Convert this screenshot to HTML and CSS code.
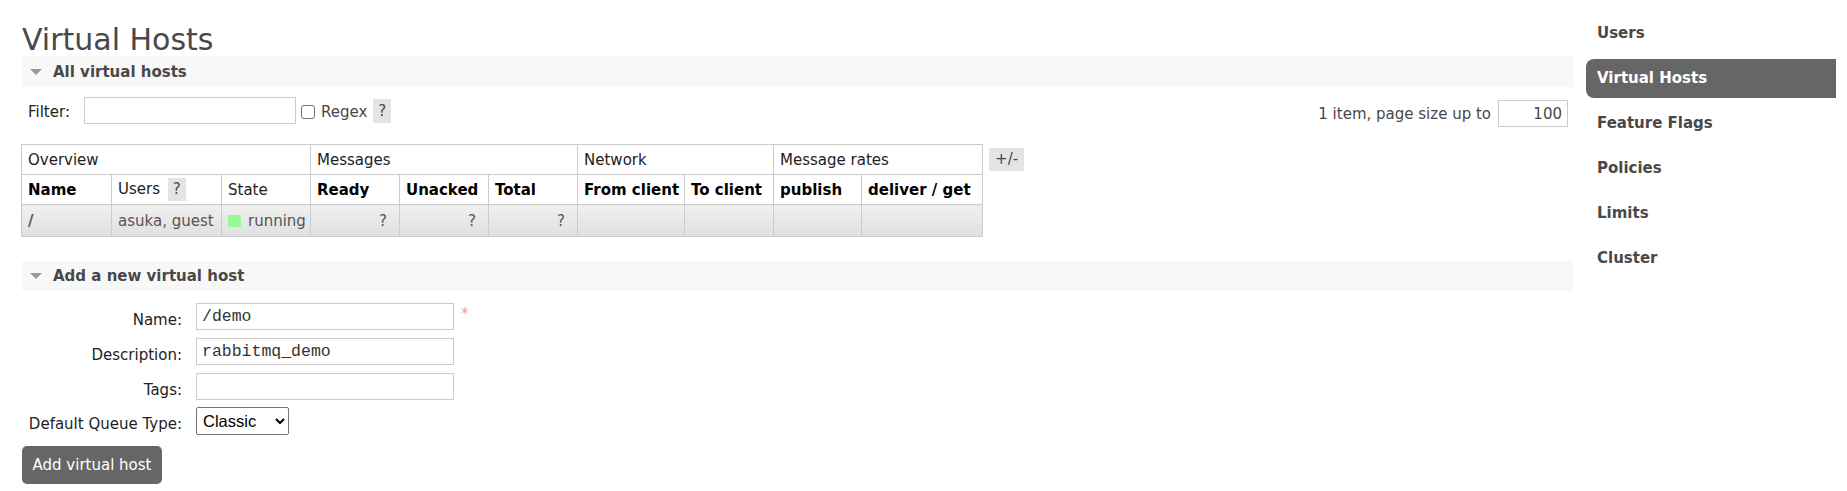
FILE: index.html
```html
<!DOCTYPE html>
<html>
<head>
<meta charset="utf-8">
<link rel="stylesheet" href="styles.css">
</head>
<body>
<div class="layout">
  <div class="main">
    <h1 class="title">Virtual Hosts</h1>
    <div class="section-head"><span class="tri"></span>All virtual hosts</div>
    <div class="filter-row">
      <div class="filter-left">
        <label class="lbl">Filter:</label>
        <input class="text-in filter-in" type="text">
        <input class="chk" type="checkbox">
        <span class="regex">Regex</span>
        <span class="help">?</span>
      </div>
      <div class="filter-right">
        <span>1 item, page size up to</span>
        <input class="text-in page-in" type="text" value="100">
      </div>
    </div>
    <div class="table-wrap">
      <table class="list">
        <colgroup>
          <col class="w90"><col class="w110"><col class="w89">
          <col class="w89"><col class="w89"><col class="w89">
          <col class="w107"><col class="w89">
          <col class="w88"><col class="w121">
        </colgroup>
        <thead>
          <tr class="grp">
            <th colspan="3">Overview</th>
            <th colspan="3">Messages</th>
            <th colspan="2">Network</th>
            <th colspan="2">Message rates</th>
          </tr>
          <tr class="cols">
            <th class="b">Name</th>
            <th>Users <span class="help sm">?</span></th>
            <th>State</th>
            <th class="b">Ready</th>
            <th class="b">Unacked</th>
            <th class="b">Total</th>
            <th class="b">From client</th>
            <th class="b">To client</th>
            <th class="b">publish</th>
            <th class="b">deliver / get</th>
          </tr>
        </thead>
        <tbody>
          <tr class="data">
            <td class="b dark">/</td>
            <td>asuka, guest</td>
            <td><span class="dot"></span>running</td>
            <td class="q">?</td>
            <td class="q">?</td>
            <td class="q">?</td>
            <td></td>
            <td></td>
            <td></td>
            <td></td>
          </tr>
        </tbody>
      </table>
      <span class="plusminus">+/-</span>
    </div>
    <div class="section-head second"><span class="tri"></span>Add a new virtual host</div>
    <div class="form">
      <div class="frow">
        <label class="flbl">Name:</label>
        <input class="text-in mono" type="text" value="/demo">
        <span class="req">*</span>
      </div>
      <div class="frow">
        <label class="flbl">Description:</label>
        <input class="text-in mono" type="text" value="rabbitmq_demo">
      </div>
      <div class="frow">
        <label class="flbl">Tags:</label>
        <input class="text-in mono" type="text">
      </div>
      <div class="frow sel-row">
        <label class="flbl">Default Queue Type:</label>
        <select class="sel"><option>Classic</option></select>
      </div>
    </div>
    <button class="btn">Add virtual host</button>
  </div>
  <nav class="side">
    <a class="nav">Users</a>
    <a class="nav active">Virtual Hosts</a>
    <a class="nav">Feature Flags</a>
    <a class="nav">Policies</a>
    <a class="nav">Limits</a>
    <a class="nav">Cluster</a>
  </nav>
</div>
</body>
</html>
```

FILE: styles.css
```css
* { box-sizing: border-box; }
html, body { margin: 0; padding: 0; background: #fff; }
body {
  font-family: "DejaVu Sans", Verdana, sans-serif;
  font-size: 15px;
  color: #484848;
  width: 1847px;
  height: 491px;
  overflow: hidden;
}
.layout { display: flex; }
.main { width: 1573px; padding-left: 22px; }
.title {
  margin: 0;
  padding-top: 24px;
  height: 56px;
  font-size: 30px;
  font-weight: normal;
  line-height: 32px;
  color: #484848;
}
.section-head {
  height: 31px;
  background: #f8f8f8;
  font-weight: bold;
  font-size: 15px;
  color: #484848;
  display: flex;
  align-items: center;
}
.section-head.second { margin-top: 24px; height: 30px; }
.tri {
  width: 0; height: 0;
  border-left: 6px solid transparent;
  border-right: 6px solid transparent;
  border-top: 6px solid #999;
  margin-left: 8px;
  margin-right: 11px;
}
.filter-row {
  display: flex;
  justify-content: space-between;
  align-items: flex-start;
  margin-top: 10px;
  height: 28px;
}
.filter-left { display: flex; align-items: center; height: 27px; }
.lbl { margin-left: 6px; margin-right: 14px; color: #222; padding-top: 2px; }
.text-in {
  border: 1px solid #ccc;
  height: 27px;
  padding: 0 5px;
  font-size: 15px;
  font-family: "DejaVu Sans", sans-serif;
  color: #484848;
  outline: none;
  background: #fff;
}
.filter-in { width: 212px; height: 27px; }
.chk {
  appearance: none;
  width: 14px; height: 14px;
  margin: 2px 6px 0 5px;
  border: 1px solid #767676;
  border-radius: 3px;
  background: #fff;
}
.regex { color: #484848; padding-top: 2px; }
.help {
  display: inline-block;
  background: #e4e4e4;
  padding: 0 5px;
  margin-left: 6px;
  line-height: 24px;
  color: #484848;
}
.help.sm { line-height: 23px; padding: 0 5px; margin-left: 3px; }
.filter-right { display: flex; align-items: center; color: #484848; padding-top: 3px; }
.page-in { width: 70px; height: 27px; margin-left: 7px; text-align: right; margin-right: 5px; }
.table-wrap { display: flex; align-items: flex-start; margin-top: 19px; margin-left: -1px; }
.list {
  border-collapse: collapse;
  table-layout: fixed;
  width: 962px;
  font-size: 15px;
}
.w88 { width: 88px; }
.w89 { width: 89px; }
.w90 { width: 90px; }
.w107 { width: 107px; }
.w110 { width: 110px; }
.w121 { width: 121px; }
.list th, .list td {
  border: 1px solid #ccc;
  text-align: left;
  padding: 0 6px;
  white-space: nowrap;
  overflow: hidden;
}
.list th { font-weight: normal; color: #222; height: 30px; }
.list .b { font-weight: bold; color: #000; }
.list tr.data td {
  height: 32px;
  background: linear-gradient(#f0f0f0, #e0e0e0);
  color: #555;
}
.list td.dark { color: #000; }
.list td.q { text-align: right; color: #999; padding-right: 12px; }
.dot {
  display: inline-block;
  width: 13px; height: 12px;
  background: #98f898;
  margin-right: 7px;
  vertical-align: -1px;
}
.plusminus {
  margin-left: 6px;
  margin-top: 4px;
  background: #e4e4e4;
  padding: 0 6px;
  line-height: 23px;
  color: #484848;
  font-size: 15px;
}
.form { margin-top: 12px; }
.frow { display: flex; align-items: flex-start; margin-bottom: 8px; }
.flbl { width: 160px; text-align: right; margin-right: 14px; color: #222; padding-top: 8px; line-height: 18px; }
.frow .text-in { width: 258px; }
.mono { font-family: "Liberation Mono", monospace; font-size: 16.5px; color: #333; }
.req { color: #f99; margin-left: 7px; font-size: 15px; margin-top: 2px; }
.sel-row { margin-top: -1px; margin-bottom: 11px; }
.sel {
  height: 28px;
  width: 93px;
  font-family: "Liberation Sans", Arial, sans-serif;
  font-size: 16.5px;
  border: 1px solid #767676;
  border-radius: 2px;
  background: #fff;
  color: #000;
  padding: 0 2px;
}
.btn {
  display: block;
  width: 140px;
  height: 38px;
  background: #666;
  color: #fff;
  border: none;
  border-radius: 5px;
  font-family: "DejaVu Sans", sans-serif;
  font-size: 15px;
  padding: 0;
}
.side {
  width: 250px;
  margin-left: 13px;
  display: flex;
  flex-direction: column;
  padding-top: 14px;
}
.nav {
  height: 39px;
  line-height: 39px;
  padding-left: 11px;
  margin-bottom: 6px;
  font-weight: bold;
  font-size: 15px;
  color: #484848;
}
.nav.active {
  background: #666;
  color: #fff;
  border-radius: 8px 0 0 8px;
}
```
